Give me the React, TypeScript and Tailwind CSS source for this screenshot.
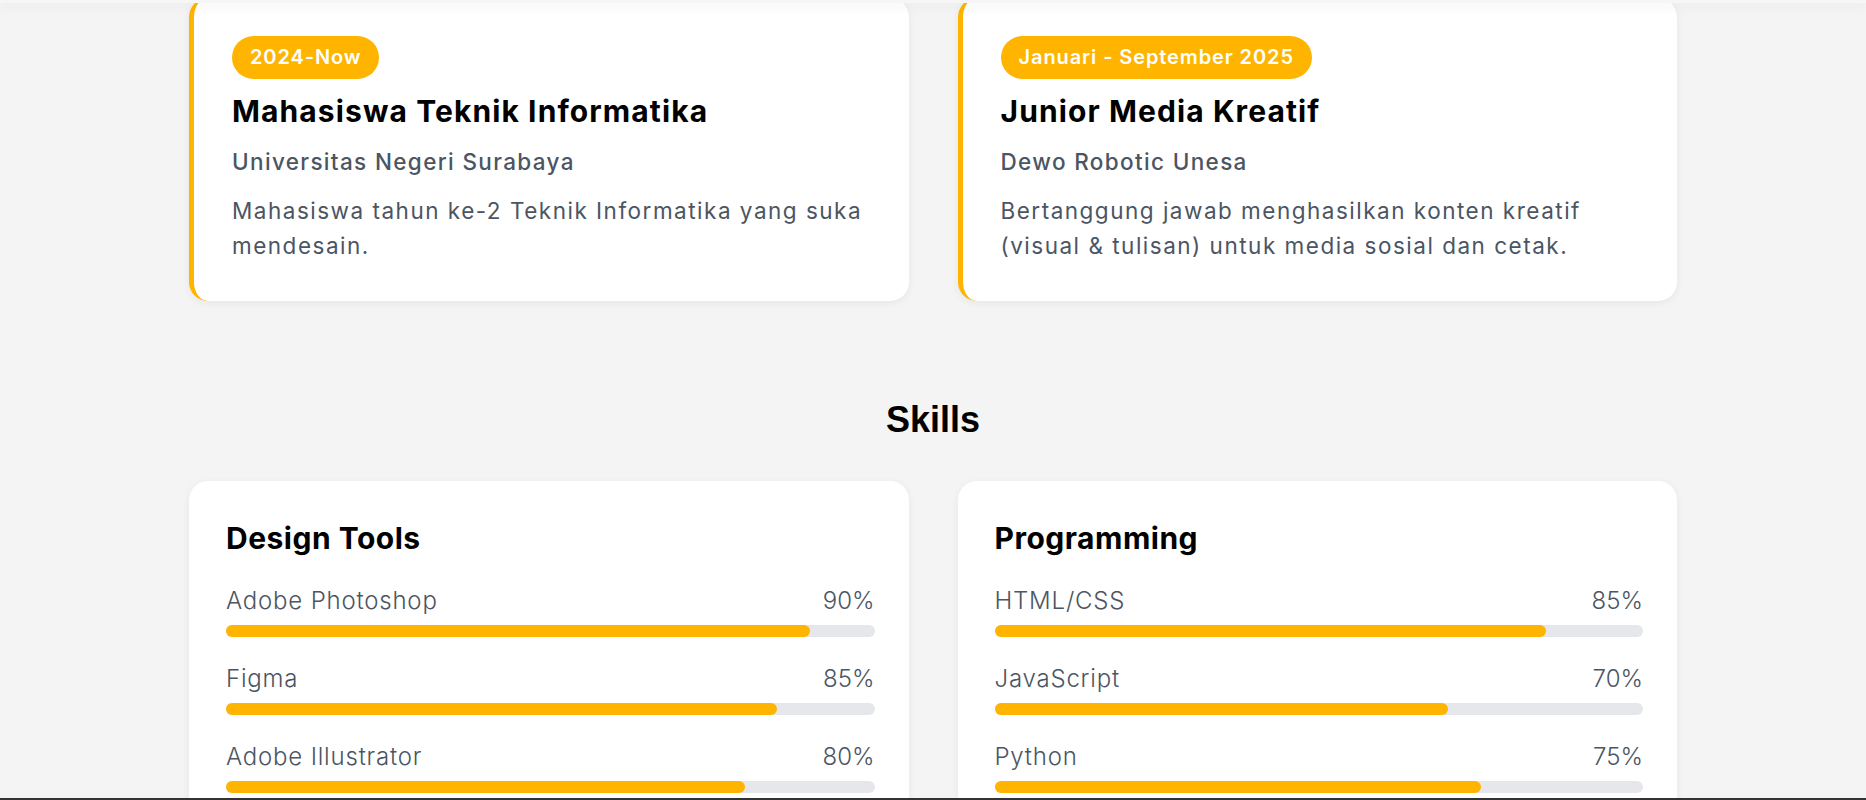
import React from 'react'

interface Experience {
    period: string
    role: string
    place: string
    desc: string
}

interface Skill {
    name: string
    level: number
}

const experiences: Experience[] = [
    {
        period: '2024-Now',
        role: 'Mahasiswa Teknik Informatika',
        place: 'Universitas Negeri Surabaya',
        desc: 'Mahasiswa tahun ke-2 Teknik Informatika yang suka mendesain.',
    },
    {
        period: 'Januari - September 2025',
        role: 'Junior Media Kreatif',
        place: 'Dewo Robotic Unesa',
        desc: 'Bertanggung jawab menghasilkan konten kreatif (visual & tulisan) untuk media sosial dan cetak.',
    },
]

const skillGroups: { title: string; items: Skill[] }[] = [
    {
        title: 'Design Tools',
        items: [
            { name: 'Adobe Photoshop', level: 90 },
            { name: 'Figma', level: 85 },
            { name: 'Adobe Illustrator', level: 80 },
        ],
    },
    {
        title: 'Programming',
        items: [
            { name: 'HTML/CSS', level: 85 },
            { name: 'JavaScript', level: 70 },
            { name: 'Python', level: 75 },
        ],
    },
]

const ExperienceCard: React.FC<{ item: Experience }> = ({ item }) => (
    <div className="rounded-[19px] border-l-[5px] border-[#ffb400] bg-white p-[38px] shadow-[0_2px_8px_rgba(0,0,0,0.06)]">
        <span className="inline-block rounded-full bg-[#ffb400] px-[18px] py-[7px] text-[20px] leading-[29px] font-semibold tracking-[0.9px] text-white">
            {item.period}
        </span>
        <h3 className="mt-[13px] text-[30px] leading-[38px] font-bold tracking-[1.1px] text-black">{item.role}</h3>
        <p className="mt-[15px] text-[22.5px] leading-[34px] font-medium tracking-[1.35px] text-[#4b5563]">{item.place}</p>
        <p className="mt-[14px] text-[22.5px] leading-[35px] tracking-[1.5px] text-[#4b5563]">{item.desc}</p>
    </div>
)

const SkillCard: React.FC<{ title: string; items: Skill[] }> = ({ title, items }) => (
    <div className="rounded-[19px] bg-white py-[38px] pr-[34px] pl-[37px] shadow-[0_2px_8px_rgba(0,0,0,0.06)]">
        <h3 className="mb-[27px] text-[30px] leading-[38px] font-bold tracking-[0.5px] text-black">{title}</h3>
        <div className="flex flex-col gap-[25px]">
            {items.map((s) => (
                <div key={s.name}>
                    <div className="mb-[7px] flex items-center justify-between text-[24px] leading-[34px] font-light tracking-[0.8px] text-[#4b5563]">
                        <span>{s.name}</span>
                        <span className="tracking-normal">{s.level}%</span>
                    </div>
                    <div className="h-[12px] w-full rounded-full bg-[#e5e7eb]">
                        {/* fill width from data */}
                        <div className="h-full rounded-full bg-[#ffb400]" style={{ width: `${s.level}%` }} />
                    </div>
                </div>
            ))}
        </div>
    </div>
)

export default function App() {
    return (
        <div className="min-h-screen bg-[#f4f4f4] font-['Inter',sans-serif]">
            {/* navbar shadow peeking at the top */}
            <div className="fixed top-0 left-0 z-10 h-[3px] w-full bg-[#f6f6f6] shadow-[0_3px_12px_rgba(0,0,0,0.09)]" />

            <div className="mx-auto -mt-[2px] w-[1488px] pb-20">
                <div className="grid grid-cols-2 gap-[49px]">
                    {experiences.map((e) => (
                        <ExperienceCard key={e.role} item={e} />
                    ))}
                </div>

                <h2 className="mt-[97px] mb-[40px] text-center font-['Liberation_Sans',Arial,sans-serif] text-[36px] leading-[43px] font-bold text-black">
                    Skills
                </h2>

                <div className="grid grid-cols-2 gap-[49px]">
                    {skillGroups.map((g) => (
                        <SkillCard key={g.title} title={g.title} items={g.items} />
                    ))}
                </div>
            </div>

            <div className="fixed bottom-0 left-0 z-10 h-[2px] w-full bg-[#333333]" />
        </div>
    )
}
